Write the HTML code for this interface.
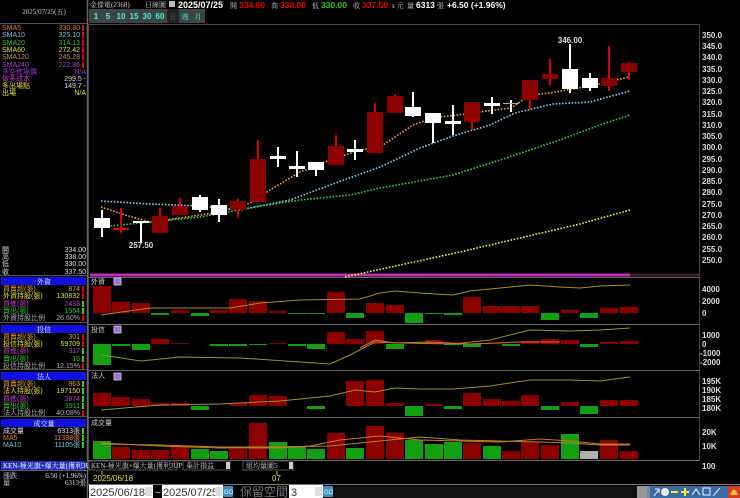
<!DOCTYPE html>
<html><head><meta charset="utf-8"><style>
html,body{margin:0;padding:0;background:#000;width:740px;height:498px;overflow:hidden}
svg{display:block}
text{font-family:"Liberation Sans","Noto Sans CJK TC",sans-serif}
.s{font-size:7px;font-family:"Liberation Serif","Noto Serif CJK SC",serif}
.ax{font-size:8px;fill:#ddd;font-weight:bold}
</style></head><body>
<svg width="740" height="498" viewBox="0 0 740 498" xmlns="http://www.w3.org/2000/svg">
<rect width="740" height="498" fill="#000"/>
<line x1="87.5" y1="0" x2="87.5" y2="498" stroke="#666" stroke-width="1.5"/>
<line x1="0" y1="23.5" x2="87" y2="23.5" stroke="#555"/>
<text x="44" y="14" class="s" fill="#ccc" text-anchor="middle">2025/07/25(五)</text>
<g class="s">
<text x="2" y="30" fill="#e08040">SMA5</text><text x="80" y="30" fill="#e08040" text-anchor="end">330.80</text>
<text x="2" y="37" fill="#7fc0e0">SMA10</text><text x="80" y="37" fill="#7fc0e0" text-anchor="end">325.10</text>
<text x="2" y="45" fill="#30c030">SMA20</text><text x="80" y="45" fill="#30c030" text-anchor="end">314.13</text>
<text x="2" y="52" fill="#e0e030">SMA60</text><text x="80" y="52" fill="#e0e030" text-anchor="end">272.42</text>
<text x="2" y="59" fill="#c09060">SMA120</text><text x="80" y="59" fill="#c09060" text-anchor="end">245.28</text>
<text x="2" y="67" fill="#b040c0">SMA240</text><text x="80" y="67" fill="#b040c0" text-anchor="end">222.86</text>
<text x="2" y="74" fill="#9030d0">多空進場價</text><text x="86" y="74" fill="#9030d0" text-anchor="end">N/A</text>
<text x="2" y="81" fill="#c040c0">做多成本</text><text x="86" y="81" fill="#ddd" text-anchor="end">299.5 -</text>
<text x="2" y="88" fill="#e0e030">多出場點</text><text x="86" y="88" fill="#ddd" text-anchor="end">149.7 -</text>
<text x="2" y="95" fill="#e0e030">出場</text><text x="86" y="95" fill="#e0e030" text-anchor="end">N/A</text>
</g>
<g fill="#e00">
<rect x="82" y="25" width="2" height="6"/><rect x="82" y="32" width="2" height="6"/><rect x="82" y="40" width="2" height="6"/><rect x="82" y="47" width="2" height="6"/><rect x="82" y="54" width="2" height="6"/><rect x="82" y="62" width="2" height="6"/>
</g>
<g class="s" fill="#ddd">
<text x="2" y="252">開</text><text x="86" y="252" text-anchor="end">334.00</text>
<text x="2" y="259">高</text><text x="86" y="259" text-anchor="end">338.00</text>
<text x="2" y="266">低</text><text x="86" y="266" text-anchor="end">330.00</text>
<text x="2" y="274">收</text><text x="86" y="274" text-anchor="end">337.50</text>
</g>
<line x1="0" y1="275.5" x2="87" y2="275.5" stroke="#555"/>
<g>
<rect x="1" y="277" width="85" height="8" fill="#1010e0"/><text x="44" y="284" class="s" fill="#fff" text-anchor="middle">外資</text>
<rect x="1" y="325" width="85" height="8" fill="#1010e0"/><text x="44" y="332" class="s" fill="#fff" text-anchor="middle">投信</text>
<rect x="1" y="372" width="85" height="8" fill="#1010e0"/><text x="44" y="379" class="s" fill="#fff" text-anchor="middle">法人</text>
<rect x="1" y="419" width="85" height="8" fill="#1010e0"/><text x="44" y="426" class="s" fill="#fff" text-anchor="middle">成交量</text>
</g>
<line x1="0" y1="322.5" x2="87" y2="322.5" stroke="#555"/>
<line x1="0" y1="369.5" x2="87" y2="369.5" stroke="#555"/>
<line x1="0" y1="416.5" x2="87" y2="416.5" stroke="#555"/>
<g class="s">
<text x="3" y="291" fill="#e0a030">買賣超(張)</text><text x="80" y="291" fill="#e0a030" text-anchor="end">874</text>
<text x="3" y="298" fill="#e0e030">外資持股(張)</text><text x="80" y="298" fill="#e0e030" text-anchor="end">130832</text>
<text x="3" y="306" fill="#c040c0">買進(張)</text><text x="80" y="306" fill="#c040c0" text-anchor="end">2438</text>
<text x="3" y="313" fill="#30c030">賣出(張)</text><text x="80" y="313" fill="#30c030" text-anchor="end">1564</text>
<text x="3" y="320" fill="#aaa">外資持股比例</text><text x="80" y="320" fill="#aaa" text-anchor="end">26.60%</text>
<text x="3" y="339" fill="#e0a030">買賣超(張)</text><text x="80" y="339" fill="#e0a030" text-anchor="end">301</text>
<text x="3" y="346" fill="#e0e030">投信持股(張)</text><text x="80" y="346" fill="#e0e030" text-anchor="end">59709</text>
<text x="3" y="353" fill="#c040c0">買進(張)</text><text x="80" y="353" fill="#c040c0" text-anchor="end">317</text>
<text x="3" y="361" fill="#30c030">賣出(張)</text><text x="80" y="361" fill="#30c030" text-anchor="end">16</text>
<text x="3" y="368" fill="#aaa">投信持股比例</text><text x="80" y="368" fill="#aaa" text-anchor="end">12.15%</text>
<text x="3" y="386" fill="#e0a030">買賣超(張)</text><text x="80" y="386" fill="#e0a030" text-anchor="end">963</text>
<text x="3" y="393" fill="#e0e030">法人持股(張)</text><text x="80" y="393" fill="#e0e030" text-anchor="end">197150</text>
<text x="3" y="401" fill="#c040c0">買進(張)</text><text x="80" y="401" fill="#c040c0" text-anchor="end">2874</text>
<text x="3" y="408" fill="#30c030">賣出(張)</text><text x="80" y="408" fill="#30c030" text-anchor="end">1911</text>
<text x="3" y="415" fill="#aaa">法人持股比例</text><text x="80" y="415" fill="#aaa" text-anchor="end">40.08%</text>
<text x="3" y="433" fill="#ddd">成交量</text><text x="80" y="433" fill="#ddd" text-anchor="end">6313張</text>
<text x="3" y="440" fill="#e08040">MA5</text><text x="80" y="440" fill="#e08040" text-anchor="end">11388張</text>
<text x="3" y="447" fill="#7fc0e0">MA10</text><text x="80" y="447" fill="#7fc0e0" text-anchor="end">11105張</text>
</g>
<g fill="#e00"><rect x="82" y="286" width="2" height="6"/><rect x="82" y="293" width="2" height="6"/><rect x="82" y="315" width="2" height="6"/><rect x="82" y="334" width="2" height="6"/><rect x="82" y="341" width="2" height="6"/><rect x="82" y="363" width="2" height="6"/><rect x="82" y="410" width="2" height="6"/></g>
<g fill="#3c3"><rect x="82" y="301" width="2" height="6"/><rect x="82" y="308" width="2" height="6"/><rect x="82" y="348" width="2" height="6"/><rect x="82" y="356" width="2" height="6"/><rect x="82" y="381" width="2" height="6"/><rect x="82" y="388" width="2" height="6"/><rect x="82" y="396" width="2" height="6"/><rect x="82" y="403" width="2" height="6"/><rect x="82" y="428" width="2" height="6"/><rect x="82" y="435" width="2" height="6"/><rect x="82" y="442" width="2" height="6"/></g>
<rect x="1" y="461" width="85" height="9" fill="#2030c0"/>
<text x="3" y="468" class="s" fill="#fff">KEN-極光旗+爆大量(獲利3UP)</text>
<line x1="0" y1="470.5" x2="87" y2="470.5" stroke="#555"/>
<text x="3" y="478" class="s" fill="#ddd">漲跌</text><text x="86" y="478" class="s" fill="#ddd" text-anchor="end">6.50 (+1.96%)</text>
<text x="3" y="485" class="s" fill="#ddd">量</text><text x="86" y="485" class="s" fill="#ddd" text-anchor="end">6313張</text>

<text x="90" y="7" class="s" fill="#ccc">金像電(2368)</text>
<text x="145" y="7" class="s" fill="#ccc">日線圖</text>
<rect x="169" y="1" width="6" height="6" fill="#bbb"/>
<text x="178" y="8" font-size="9" font-weight="bold" fill="#fff">2025/07/25</text>
<text x="230" y="8" class="s" fill="#ccc">開</text><text x="239" y="8" font-size="8.5" font-weight="bold" fill="#e00">334.00</text>
<text x="271" y="8" class="s" fill="#ccc">高</text><text x="280" y="8" font-size="8.5" font-weight="bold" fill="#e00">338.00</text>
<text x="312" y="8" class="s" fill="#ccc">低</text><text x="321" y="8" font-size="8.5" font-weight="bold" fill="#2c2">330.00</text>
<text x="353" y="8" class="s" fill="#ccc">收</text><text x="362" y="8" font-size="8.5" font-weight="bold" fill="#e00">337.50</text>
<text x="392" y="8" class="s" fill="#ccc">s 元</text>
<text x="407" y="8" class="s" fill="#ccc">量</text><text x="416" y="8" font-size="8.5" font-weight="bold" fill="#fff">6313</text><text x="437" y="8" class="s" fill="#ccc">張</text>
<text x="447" y="8" font-size="8.5" font-weight="bold" fill="#fff">+6.50 (+1.96%)</text>
<rect x="89" y="9" width="116" height="14" fill="#3c4444"/>
<g font-size="8" font-weight="bold" fill="#4ee" text-anchor="middle">
<text x="96" y="19">1</text><text x="108" y="19">5</text><text x="121" y="19">10</text><text x="134" y="19">15</text><text x="147" y="19">30</text><text x="160" y="19">60</text>
</g>
<rect x="167" y="9" width="12" height="14" fill="#222"/>
<text x="173" y="19" class="s" fill="#666" text-anchor="middle">日</text>
<text x="185" y="19" class="s" fill="#4ee" text-anchor="middle">週</text>
<text x="198" y="19" class="s" fill="#4ee" text-anchor="middle">月</text>

<rect x="88.5" y="24.5" width="611" height="436" fill="none" stroke="#554050"/>
<g stroke="#666">
<line x1="88" y1="277.5" x2="700" y2="277.5"/>
<line x1="88" y1="324.5" x2="700" y2="324.5"/>
<line x1="88" y1="370.5" x2="700" y2="370.5"/>
<line x1="88" y1="417.5" x2="700" y2="417.5"/>
<line x1="88" y1="460.5" x2="700" y2="460.5"/>
</g>
<line x1="90" y1="275" x2="630" y2="275" stroke="#c030c0" stroke-width="3"/>
<line x1="630" y1="275" x2="700" y2="275" stroke="#402030" stroke-width="3"/>
<g class="ax">
<text x="702" y="38">350.0</text><text x="702" y="49">345.0</text><text x="702" y="60">340.0</text><text x="702" y="72">335.0</text><text x="702" y="83">330.0</text><text x="702" y="94">325.0</text><text x="702" y="105">320.0</text><text x="702" y="117">315.0</text><text x="702" y="128">310.0</text><text x="702" y="139">305.0</text><text x="702" y="150">300.0</text><text x="702" y="162">295.0</text><text x="702" y="173">290.0</text><text x="702" y="184">285.0</text><text x="702" y="195">280.0</text><text x="702" y="207">275.0</text><text x="702" y="218">270.0</text><text x="702" y="229">265.0</text><text x="702" y="240">260.0</text><text x="702" y="252">255.0</text><text x="702" y="263">250.0</text>
<text x="702" y="292">4000</text><text x="702" y="304">2000</text><text x="702" y="316">0</text>
<text x="702" y="338">1000</text><text x="702" y="347">0</text><text x="700" y="356">-1000</text><text x="700" y="365">-2000</text>
<text x="702" y="384">195K</text><text x="702" y="393">190K</text><text x="702" y="402">185K</text><text x="702" y="411">180K</text>
<text x="702" y="435">20K</text><text x="702" y="449">10K</text><text x="702" y="469">100</text>
</g>
<g fill="none" stroke-width="1.6" stroke-dasharray="1.6 1.6">
<polyline stroke="#f0a040" points="101,207 125,215 150,222 180,218 220,212 250,203 270,190 300,172 330,160 360,150 380,147 413,125 433,118 472,113 511,108 530,95 550,93 590,86 629,77"/>
<polyline stroke="#80c8f0" points="101,201 150,204 200,206 240,210 290,200 330,185 380,167 420,148 453,136 490,125 515,113 553,104 590,102 630,91"/>
<polyline stroke="#30d040" points="101,227 150,222 200,217 260,206 300,200 350,195 380,188 453,175 500,160 560,140 600,125 630,115"/>
<polyline stroke="#f0f040" points="345,277 400,265 460,252 520,238 580,224 630,210"/>
</g>
<g stroke-width="2">
<g stroke="#fff">
<line x1="102" y1="210" x2="102" y2="237"/><line x1="141" y1="221" x2="141" y2="243"/><line x1="200" y1="195" x2="200" y2="212"/><line x1="219" y1="199" x2="219" y2="222"/><line x1="278" y1="147" x2="278" y2="167"/><line x1="297" y1="151" x2="297" y2="177"/><line x1="316" y1="162" x2="316" y2="176"/><line x1="355" y1="140" x2="355" y2="160"/><line x1="413" y1="92" x2="413" y2="117"/><line x1="433" y1="113" x2="433" y2="143"/><line x1="453" y1="105" x2="453" y2="135"/><line x1="492" y1="97" x2="492" y2="114"/><line x1="511" y1="100" x2="511" y2="112"/><line x1="570" y1="44" x2="570" y2="93"/><line x1="590" y1="73" x2="590" y2="91"/>
</g>
<g stroke="#e00000">
<line x1="121" y1="208" x2="121" y2="233"/><line x1="160" y1="208" x2="160" y2="216"/><line x1="180" y1="198" x2="180" y2="206"/><line x1="238" y1="199" x2="238" y2="217"/><line x1="258" y1="140" x2="258" y2="160"/><line x1="336" y1="135" x2="336" y2="146"/><line x1="375" y1="103" x2="375" y2="112"/><line x1="395" y1="94" x2="395" y2="96"/><line x1="472" y1="122" x2="472" y2="130"/><line x1="530" y1="100" x2="530" y2="110"/><line x1="550" y1="59" x2="550" y2="85"/><line x1="609" y1="46" x2="609" y2="91"/><line x1="629" y1="62" x2="629" y2="80"/>
</g>
</g>
<g fill="#fff">
<rect x="94" y="218" width="16" height="10"/><rect x="133" y="221" width="16" height="2"/><rect x="192" y="197" width="16" height="13"/><rect x="211" y="205" width="16" height="10"/><rect x="270" y="156" width="16" height="3"/><rect x="289" y="166" width="16" height="3"/><rect x="308" y="162" width="16" height="8"/><rect x="347" y="149" width="16" height="3"/><rect x="405" y="107" width="16" height="9"/><rect x="425" y="113" width="16" height="10"/><rect x="445" y="121" width="16" height="3"/><rect x="484" y="103" width="16" height="3"/><rect x="562" y="69" width="16" height="20"/><rect x="582" y="78" width="16" height="10"/>
</g>
<rect x="503" y="103" width="16" height="1" fill="#aaa"/>
<rect x="113" y="228" width="16" height="2" fill="#e00"/>
<g fill="#8c0000">
<rect x="152" y="216" width="16" height="17"/><rect x="172" y="206" width="16" height="9"/><rect x="230" y="201" width="16" height="9"/><rect x="250" y="159" width="16" height="43"/><rect x="328" y="146" width="16" height="19"/><rect x="367" y="112" width="16" height="41"/><rect x="387" y="96" width="16" height="17"/><rect x="464" y="102" width="16" height="20"/><rect x="522" y="80" width="16" height="20"/><rect x="542" y="74" width="16" height="5"/><rect x="601" y="78" width="16" height="8"/><rect x="621" y="63" width="16" height="9"/>
</g>
<text x="141" y="248" font-size="8" font-weight="bold" fill="#ddd" text-anchor="middle">257.50</text>
<text x="570" y="43" font-size="8" font-weight="bold" fill="#ddd" text-anchor="middle">346.00</text>

<g class="s" fill="#ccc">
<text x="91" y="284">外資</text><text x="91" y="332">投信</text><text x="91" y="378">法人</text><text x="91" y="425">成交量</text>
</g>
<g fill="#a070e0" stroke="#dcc" stroke-width="0.8">
<rect x="114" y="278" width="7" height="7"/><rect x="114" y="326" width="7" height="7"/><rect x="114" y="373" width="7" height="7"/>
</g>

<g fill="#8c0000">
<rect x="93" y="286" width="18" height="27"/><rect x="112" y="302" width="18" height="11"/><rect x="132" y="303" width="18" height="10"/><rect x="171" y="310" width="18" height="3"/><rect x="210" y="310" width="18" height="3"/><rect x="229" y="299" width="18" height="14"/><rect x="249" y="301" width="18" height="12"/><rect x="269" y="311" width="18" height="2"/><rect x="327" y="292" width="18" height="21"/><rect x="366" y="303" width="18" height="10"/><rect x="386" y="305" width="18" height="8"/><rect x="463" y="297" width="18" height="16"/><rect x="483" y="306" width="18" height="7"/><rect x="502" y="306" width="18" height="7"/><rect x="521" y="306" width="18" height="7"/><rect x="561" y="310" width="18" height="3"/><rect x="600" y="308" width="18" height="5"/><rect x="620" y="307" width="18" height="6"/>
</g>
<g fill="#12a012">
<rect x="151" y="313" width="18" height="2"/><rect x="191" y="313" width="18" height="3"/><rect x="288" y="313" width="18" height="1"/><rect x="307" y="313" width="18" height="1"/><rect x="346" y="313" width="18" height="5"/><rect x="405" y="313" width="18" height="10"/><rect x="425" y="313" width="18" height="1"/><rect x="444" y="313" width="18" height="2"/><rect x="541" y="313" width="18" height="7"/><rect x="580" y="313" width="18" height="5"/>
</g>
<polyline fill="none" stroke="#a09020" stroke-width="1" points="101,315 150,308 230,308 260,303 300,300 360,299 380,293 395,291 420,293 453,295 470,291 510,287 530,285 560,287 580,288 600,286 630,285"/>

<g fill="#8c0000">
<rect x="151" y="339" width="18" height="5"/><rect x="171" y="343" width="18" height="1"/><rect x="269" y="343" width="18" height="1"/><rect x="327" y="332" width="18" height="12"/><rect x="346" y="339" width="18" height="5"/><rect x="366" y="331" width="18" height="13"/><rect x="425" y="340" width="18" height="4"/><rect x="483" y="343" width="18" height="1"/><rect x="521" y="341" width="18" height="3"/><rect x="541" y="339" width="18" height="5"/><rect x="561" y="340" width="18" height="4"/><rect x="600" y="342" width="18" height="2"/><rect x="620" y="341" width="18" height="3"/>
</g>
<g fill="#12a012">
<rect x="93" y="344" width="18" height="21"/><rect x="112" y="344" width="18" height="2"/><rect x="132" y="344" width="18" height="6"/><rect x="210" y="344" width="18" height="2"/><rect x="229" y="344" width="18" height="2"/><rect x="249" y="344" width="18" height="1"/><rect x="288" y="344" width="18" height="2"/><rect x="307" y="344" width="18" height="5"/><rect x="386" y="344" width="18" height="5"/><rect x="444" y="344" width="18" height="1"/><rect x="463" y="344" width="18" height="3"/><rect x="502" y="344" width="18" height="2"/><rect x="580" y="344" width="18" height="3"/>
</g>
<polyline fill="none" stroke="#a09020" stroke-width="1" points="101,355 141,361 180,357 240,358 300,362 330,364 350,355 375,342 400,343 453,344 490,340 530,330 570,331 600,330 630,328"/>
<polyline fill="none" stroke="#e07020" stroke-width="1" points="360,348 375,340 395,343 430,342 470,344 520,342 560,342"/>

<g fill="#8c0000">
<rect x="93" y="393" width="18" height="13"/><rect x="112" y="397" width="18" height="9"/><rect x="132" y="399" width="18" height="7"/><rect x="151" y="403" width="18" height="3"/><rect x="171" y="403" width="18" height="3"/><rect x="229" y="403" width="18" height="3"/><rect x="249" y="395" width="18" height="11"/><rect x="269" y="396" width="18" height="10"/><rect x="346" y="381" width="18" height="25"/><rect x="366" y="380" width="18" height="26"/><rect x="386" y="403" width="18" height="3"/><rect x="425" y="404" width="18" height="2"/><rect x="463" y="393" width="18" height="13"/><rect x="483" y="399" width="18" height="7"/><rect x="502" y="401" width="18" height="5"/><rect x="521" y="395" width="18" height="11"/><rect x="561" y="402" width="18" height="4"/><rect x="600" y="400" width="18" height="6"/><rect x="620" y="400" width="18" height="6"/>
</g>
<g fill="#12a012">
<rect x="191" y="406" width="18" height="4"/><rect x="307" y="406" width="18" height="3"/><rect x="405" y="406" width="18" height="10"/><rect x="444" y="406" width="18" height="3"/><rect x="541" y="406" width="18" height="4"/><rect x="580" y="406" width="18" height="8"/>
</g>
<polyline fill="none" stroke="#a09020" stroke-width="1" points="101,410 160,405 220,404 280,401 330,396 355,390 375,392 395,388 420,389 453,389 490,386 530,380 570,380 600,381 630,377"/>

<g fill="#8c0000">
<rect x="112" y="447" width="18" height="12"/><rect x="132" y="450" width="18" height="9"/><rect x="151" y="450" width="18" height="9"/><rect x="171" y="447" width="18" height="12"/><rect x="229" y="449" width="18" height="10"/><rect x="249" y="423" width="18" height="36"/><rect x="327" y="433" width="18" height="26"/><rect x="366" y="426" width="18" height="33"/><rect x="386" y="433" width="18" height="26"/><rect x="463" y="443" width="18" height="16"/><rect x="502" y="451" width="18" height="8"/><rect x="521" y="442" width="18" height="17"/><rect x="541" y="445" width="18" height="14"/><rect x="600" y="440" width="18" height="19"/><rect x="620" y="451" width="18" height="8"/>
</g>
<g fill="#12a012">
<rect x="93" y="441" width="18" height="18"/><rect x="191" y="449" width="18" height="10"/><rect x="210" y="451" width="18" height="8"/><rect x="269" y="442" width="18" height="17"/><rect x="288" y="446" width="18" height="13"/><rect x="307" y="449" width="18" height="10"/><rect x="346" y="448" width="18" height="11"/><rect x="405" y="440" width="18" height="19"/><rect x="425" y="444" width="18" height="15"/><rect x="444" y="442" width="18" height="17"/><rect x="483" y="446" width="18" height="13"/><rect x="561" y="434" width="18" height="25"/>
</g>
<rect x="580" y="451" width="18" height="8" fill="#b0b0b0"/>
<polyline fill="none" stroke="#a09020" stroke-width="1" points="101,444 160,445 220,447 280,447 330,446 380,441 420,437 460,440 500,441 540,442 570,443 600,445 630,445"/>
<polyline fill="none" stroke="#e07020" stroke-width="1" points="101,443 160,446 220,448 280,448 310,446 340,440 380,436 420,440 460,441 500,442 540,439 570,441 600,444 630,444"/>

<rect x="89" y="461" width="88" height="9" fill="#000" stroke="#555"/>
<text x="91" y="468" class="s" fill="#ccc">KEN-極光旗+爆大量(獲利3UP)</text>
<rect x="183" y="461" width="47" height="9" fill="#000" stroke="#555"/>
<text x="186" y="468" class="s" fill="#ccc">棄計損益</text><rect x="226" y="462" width="4" height="7" fill="#ccc"/>
<rect x="243" y="461" width="50" height="9" fill="#000" stroke="#555"/>
<text x="246" y="468" class="s" fill="#ccc">組均量圖5</text><rect x="289" y="462" width="4" height="7" fill="#ccc"/>
<line x1="102" y1="471" x2="102" y2="475" stroke="#cc3"/>
<line x1="277" y1="471" x2="277" y2="475" stroke="#cc3"/>
<text x="93" y="481" font-size="8" fill="#e0e030">2025/06/18</text>
<text x="272" y="481" font-size="8" fill="#e0e030">07</text>
<line x1="88" y1="484.5" x2="740" y2="484.5" stroke="#777"/>
<rect x="89" y="485" width="64" height="13" fill="#fff"/>
<text x="90" y="496" font-size="11" fill="#333" font-family="Liberation Serif">2025/06/18</text>
<rect x="145" y="487" width="7" height="9" fill="#ddd"/>
<text x="155" y="496" font-size="10" fill="#ccc">~</text>
<rect x="162" y="485" width="61" height="13" fill="#fff"/>
<text x="163" y="496" font-size="11" fill="#333" font-family="Liberation Serif">2025/07/25</text>
<rect x="215" y="487" width="7" height="9" fill="#ddd"/>
<rect x="223" y="486" width="10" height="11" fill="#3a90c0"/><text x="224" y="494" font-size="6" fill="#fff">GO</text>
<text x="240" y="496" font-size="12" fill="#777">保留空間</text>
<rect x="289" y="485" width="34" height="13" fill="#fff"/>
<text x="291" y="496" font-size="11" fill="#333">3</text>
<rect x="315" y="487" width="7" height="9" fill="#ddd"/>
<rect x="323" y="486" width="10" height="11" fill="#3a90c0"/><text x="324" y="494" font-size="6" fill="#fff">GO</text>
<rect x="335" y="486" width="303" height="12" fill="#111"/>
<rect x="637" y="486" width="103" height="12" fill="#7a8aa0"/>
<rect x="637" y="486" width="10" height="12" fill="#999"/>
<rect x="650" y="486" width="78" height="12" fill="#3a6aa0"/>
<g fill="none" stroke="#cde" stroke-width="1.2">
<path d="M654 496 L659 489 M655 489 L659 489 L659 493"/>
<circle cx="665" cy="492" r="4" fill="#eee" stroke="none"/>
<path d="M671 492 H678" stroke="#ee3" stroke-width="2"/>
<path d="M681 492 H689 M685 488 V496" stroke="#ee3" stroke-width="2"/>
<path d="M692 495 L696 489 L700 495"/>
<rect x="703" y="488" width="7" height="7"/>
<path d="M713 496 L720 488"/>
</g>
<rect x="728" y="486" width="12" height="12" fill="#d04020"/>
<path d="M730 495 Q734 484 738 495 Z" fill="#f0c030"/>
</svg>
</body></html>
